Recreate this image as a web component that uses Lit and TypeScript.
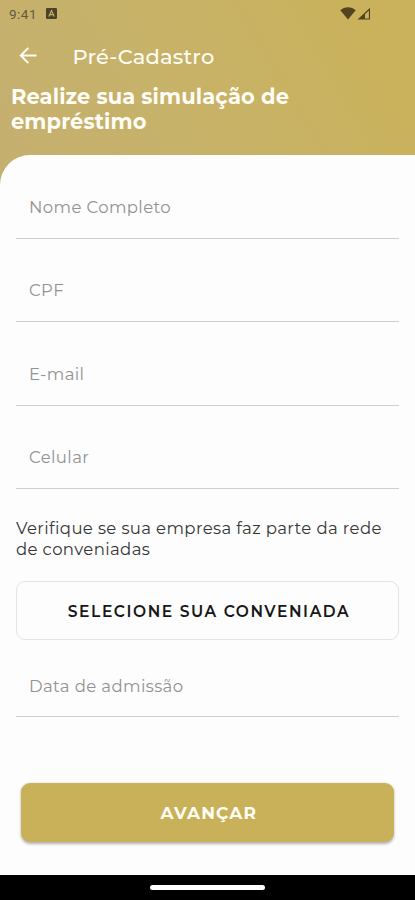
import { LitElement, html, css } from "lit";
import { customElement, property } from "lit/decorators.js";

@customElement("form-field")
class FormField extends LitElement {
  @property() label = "";
  static styles = css`
    :host { display: block; height: 83.5px; box-sizing: border-box; border-bottom: 1.5px solid #cfcfcf; padding: 39.6px 13px 0; }
    .label { font-size: 16.5px; line-height: 24px; color: #929292; font-weight: 400; letter-spacing: 0.38px; white-space: nowrap; }
  `;
  render() {
    return html`<div class="label">${this.label}</div>`;
  }
}

@customElement("app-root")
class AppRoot extends LitElement {
  static styles = css`
    :host { display: flex; flex-direction: column; width: 415px; height: 900px; overflow: hidden; background: linear-gradient(60deg, #c4af70 0, #c7b26a 180px, #cab25c 400px) 0 0 / 415px 190px no-repeat, #fdfdfd; font-family: Montserrat, Inter, sans-serif; }
    .status { height: 27px; display: flex; align-items: center; box-sizing: border-box; padding: 0 44px 0 9px; color: #66593a; }
    .time { font: 13.5px/16px Roboto, sans-serif; width: 37px; letter-spacing: 0.5px; }
    .badge { width: 11px; height: 11px; }
    .wifi { width: 16px; height: 13px; margin-left: auto; }
    .signal { width: 14px; height: 13px; margin-left: 1px; }
    .bar { height: 57px; display: flex; align-items: center; padding-left: 19px; color: #fffdf5; }
    .back { width: 18px; height: 18px; }
    .title { margin-left: 35.5px; font-size: 21px; font-weight: 500; line-height: 28px; letter-spacing: 0.2px; padding-top: 2px; }
    .headline { height: 71px; margin: 0 0 0 11px; font-size: 21px; font-weight: 700; line-height: 25px; letter-spacing: 0.12px; color: #fffdf5; }
    .sheet { flex: 1; background: #fdfdfd; border-top-left-radius: 30px; padding: 0 16px; display: flex; flex-direction: column; }
    .note { margin: 28.5px 0 0; font-size: 16.5px; line-height: 21px; color: #353535; letter-spacing: 0.38px; white-space: nowrap; }
    .select { height: 59px; margin-top: 21.5px; border: 1px solid #e4e4e4; border-radius: 9px; box-sizing: border-box; display: flex; align-items: center; justify-content: center; font-size: 15.5px; font-weight: 600; letter-spacing: 1.58px; text-indent: 3px; color: #171717; padding-top: 2px; }
    .date { height: 77px; padding-top: 34px; }
    .next { height: 59px; margin: 66px 5px 0; border-radius: 9px; background: #c9b159; box-shadow: 0 1.5px 3px rgba(0, 0, 0, 0.3); display: flex; align-items: center; justify-content: center; font-size: 17px; font-weight: 700; letter-spacing: 1.1px; text-indent: 2.5px; color: #fffdf5; padding-top: 1px; box-sizing: border-box; }
    .nav { height: 25px; background: #000; display: flex; justify-content: center; }
    .pill { width: 115px; height: 5px; border-radius: 3px; background: #fff; margin-top: 10px; }
  `;
  render() {
    return html`
      <div class="status">
        <span class="time">9:41</span>
        <svg class="badge" viewBox="0 0 11 11"><rect width="11" height="11" rx="1.2" fill="#4d4226"/><path d="M2.8 8.5 5.5 2.6 8.2 8.5M3.8 6.6h3.4" fill="none" stroke="#c4b16d" stroke-width="1.2"/></svg>
        <svg class="wifi" viewBox="0 0 16 13"><path d="M.3 3.2C4.5-.7 11.5-.7 15.7 3.2L8 12.6Z" fill="#51441f"/></svg>
        <svg class="signal" viewBox="0 0 14 13"><path d="M.5 12.5 13 .8v11.7Z" fill="#51441f"/><path d="M8 7.2 11.900 3.500v7.900H8Z" fill="#c9b261"/></svg>
      </div>
      <div class="bar">
        <svg class="back" viewBox="0 0 18 18" fill="none" stroke="#fffdf5" stroke-width="2"><path d="M17.5 8.5H2.2M9.3 .9 1.8 8.5l7.5 7.6"/></svg>
        <span class="title">Pré-Cadastro</span>
      </div>
      <h1 class="headline">Realize sua simulação de<br>empréstimo</h1>
      <div class="sheet">
        <form-field label="Nome Completo"></form-field>
        <form-field label="CPF"></form-field>
        <form-field label="E-mail"></form-field>
        <form-field label="Celular"></form-field>
        <p class="note">Verifique se sua empresa faz parte da rede<br>de conveniadas</p>
        <div class="select">SELECIONE SUA CONVENIADA</div>
        <form-field class="date" label="Data de admissão"></form-field>
        <div class="next">AVANÇAR</div>
      </div>
      <div class="nav"><div class="pill"></div></div>
    `;
  }
}
